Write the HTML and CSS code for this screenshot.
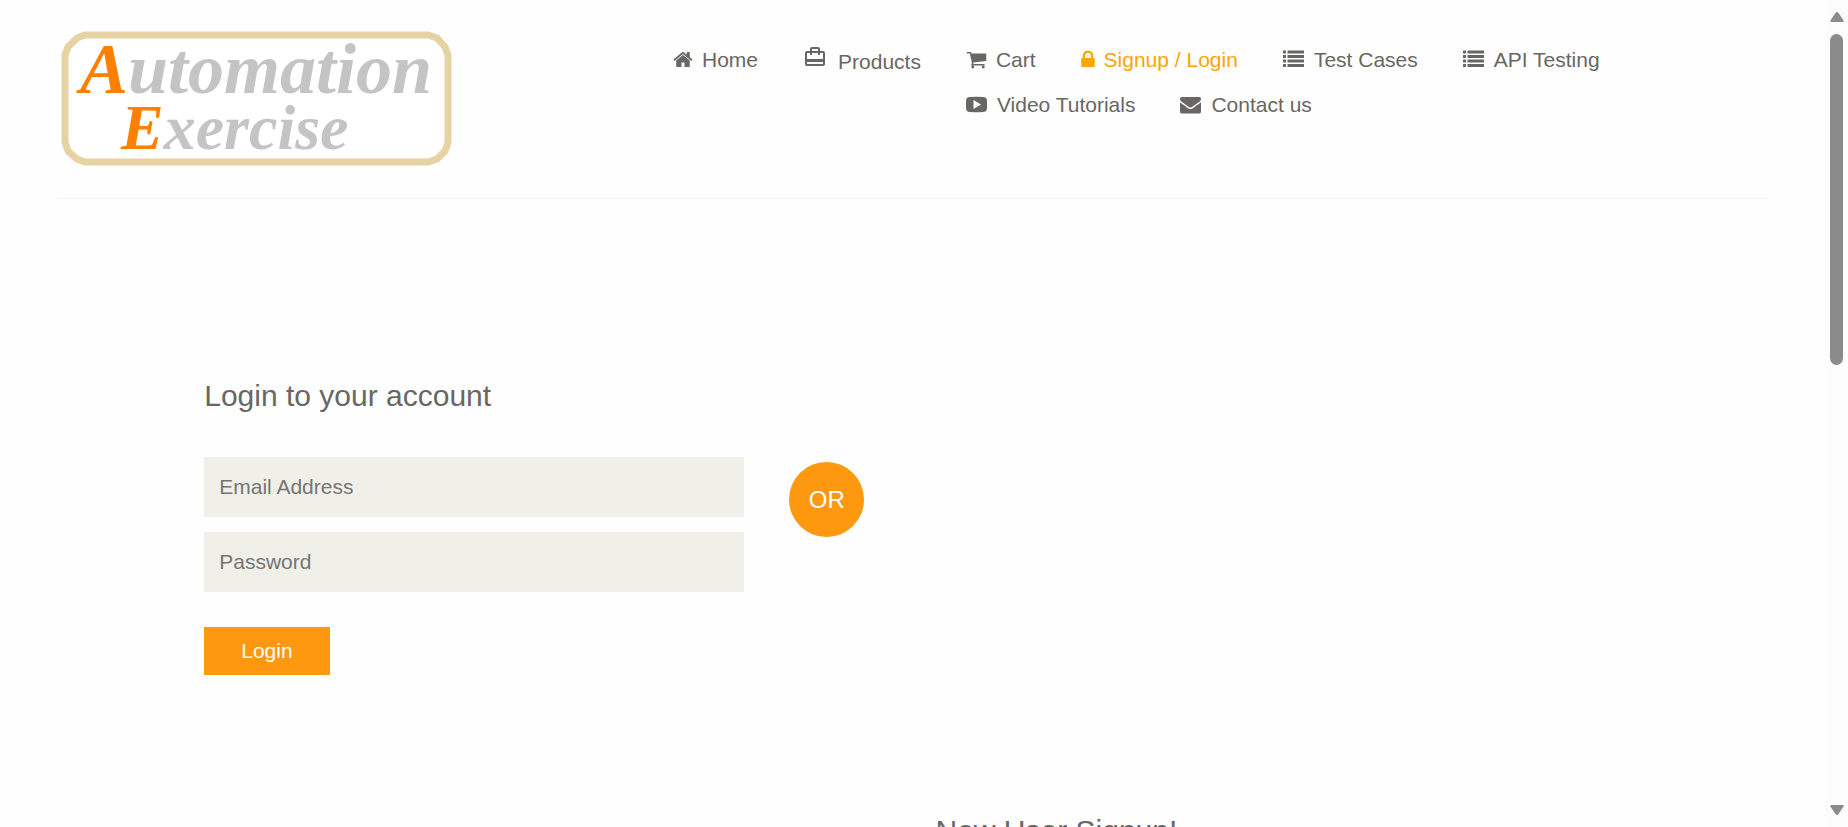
FILE: index.html
```html
<!DOCTYPE html>
<html lang="en">
<head>
<meta charset="utf-8">
<title>Automation Exercise - Signup / Login</title>
<link rel="stylesheet" href="styles.css">
</head>
<body>
<header class="header">
  <a class="logo" href="#" aria-label="Automation Exercise">
    <svg width="392" height="138" viewBox="0 0 392 138">
      <path class="logo-frame" d="M24 5H367L376 8L384 17L387 25V112L384 121L376 129L367 132H24L16 129L7 121L4 112V25L7 17L16 8Z"/>
      <text class="logo-top" x="19" y="63"><tspan class="logo-accent">A</tspan>utomation</text>
      <text class="logo-bottom" x="60" y="119"><tspan class="logo-accent">E</tspan>xercise</text>
    </svg>
  </a>
  <nav class="nav">
    <ul class="menu">
      <li><a href="#"><svg width="20" height="21" viewBox="43 0 1707 1792"><path d="M1472 992v480q0 26-19 45t-45 19h-384v-384h-256v384h-384q-26 0-45-19t-19-45v-480q0-1 .5-3t.5-3l575-474 575 474q1 2 1 6zm223-69l-62 74q-8 9-21 11h-3q-13 0-21-7l-692-577-692 577q-12 8-24 7-13-2-21-11l-62-74q-8-10-7-23.500t11-21.500l719-599q32-26 76-26t76 26l244 204v-195q0-14 9-23t23-9h192q14 0 23 9t9 23v408l219 182q10 8 11 21.500t-7 23.500z"/></svg>Home</a></li>
      <li><a class="tall" href="#"><svg width="24" height="24" viewBox="0 0 24 24"><path d="M20 6h-3V4c0-1.110-.89-2-2-2H9c-1.110 0-2 .89-2 2v2H4c-1.110 0-2 .89-2 2v11c0 1.110.89 2 2 2h16c1.110 0 2-.89 2-2V8c0-1.110-.89-2-2-2zM9 4h6v2H9V4zm11 15H4v-2h16v2zm0-5H4V8h3v2h2V8h6v2h2V8h3v6z"/></svg>Products</a></li>
      <li><a href="#"><svg width="21" height="21" viewBox="0 0 1792 1792"><path d="M704 1536q0 52-38 90t-90 38-90-38-38-90 38-90 90-38 90 38 38 90zm896 0q0 52-38 90t-90 38-90-38-38-90 38-90 90-38 90 38 38 90zm128-1088v512q0 24-16.500 42.500t-40.500 21.500l-1044 122q13 60 13 70 0 16-24 64h920q26 0 45 19t19 45-19 45-45 19h-1024q-26 0-45-19t-19-45q0-11 8-31.500t16-36 21.500-40 15.500-29.500l-177-823h-204q-26 0-45-19t-19-45 19-45 45-19h256q16 0 28.500 6.500t19.500 15.500 13 24.500 8 26 5.500 29.500 4.500 26h1201q26 0 45 19t19 45z"/></svg>Cart</a></li>
      <li><a class="active" href="#"><svg width="14" height="21" viewBox="299 0 1195 1792"><path d="M640 768h512v-192q0-106-75-181t-181-75-181 75-75 181v192zm832 96v576q0 40-28 68t-68 28h-960q-40 0-68-28t-28-68v-576q0-40 28-68t68-28h32v-192q0-184 132-316t316-132 316 132 132 316v192h32q40 0 68 28t28 68z"/></svg>Signup / Login</a></li>
      <li><a href="#"><svg width="22" height="21" viewBox="0 0 1877 1792"><path d="M20 128H236Q256 128 256 148V364Q256 384 236 384H20Q0 384 0 364V148Q0 128 20 128ZM20 512H236Q256 512 256 532V748Q256 768 236 768H20Q0 768 0 748V532Q0 512 20 512ZM20 896H236Q256 896 256 916V1132Q256 1152 236 1152H20Q0 1152 0 1132V916Q0 896 20 896ZM20 1280H236Q256 1280 256 1300V1516Q256 1536 236 1536H20Q0 1536 0 1516V1300Q0 1280 20 1280ZM384 128H1792V384H384ZM384 512H1792V768H384ZM384 896H1792V1152H384ZM384 1280H1792V1536H384Z"/></svg>Test Cases</a></li>
      <li><a href="#"><svg width="22" height="21" viewBox="0 0 1877 1792"><path d="M20 128H236Q256 128 256 148V364Q256 384 236 384H20Q0 384 0 364V148Q0 128 20 128ZM20 512H236Q256 512 256 532V748Q256 768 236 768H20Q0 768 0 748V532Q0 512 20 512ZM20 896H236Q256 896 256 916V1132Q256 1152 236 1152H20Q0 1152 0 1132V916Q0 896 20 896ZM20 1280H236Q256 1280 256 1300V1516Q256 1536 236 1536H20Q0 1536 0 1516V1300Q0 1280 20 1280ZM384 128H1792V384H384ZM384 512H1792V768H384ZM384 896H1792V1152H384ZM384 1280H1792V1536H384Z"/></svg>API Testing</a></li>
      <li><a href="#"><svg width="22" height="21" viewBox="0 0 22 21"><path fill-rule="evenodd" d="M4 3Q10.500 2.600 17 3Q21 3 21 7V14Q21 18 17 18Q10.500 18.400 4 18Q0 18 0 14V7Q0 3 4 3ZM7.500 6V15L15 10.500Z"/></svg>Video Tutorials</a></li>
      <li><a href="#"><svg width="22" height="21" viewBox="0 0 1877 1792"><path d="M1792 710v794q0 66-47 113t-113 47h-1472q-66 0-113-47t-47-113v-794q44 49 101 87 362 246 497 345 57 42 92.500 65.500t94.500 48 110 24.500h2q51 0 110-24.500t94.500-48 92.500-65.500q170-123 498-345 57-39 100-87zm0-294q0 79-49 151t-122 123q-376 261-468 325-10 7-42.500 31t-54 38.500-52 32.500-57.500 27-50 9h-2q-23 0-50-9t-57.500-27-52-32.500-54-38.500-42.500-31q-91-64-262-182.500t-205-142.500q-62-42-117-115.500t-55-136.500q0-78 41.500-130t118.500-52h1472q65 0 112.500 47t47.500 113z"/></svg>Contact us</a></li>
    </ul>
  </nav>
</header>
<main class="account">
  <section class="login">
    <h2>Login to your account</h2>
    <form class="login-form">
      <input type="email" placeholder="Email Address" aria-label="Email Address">
      <input type="password" placeholder="Password" aria-label="Password">
      <button type="submit">Login</button>
    </form>
  </section>
  <div class="or">OR</div>
  <section class="signup">
    <h2>New User Signup!</h2>
  </section>
</main>
<div class="scrollbar" aria-hidden="true">
  <svg width="14" height="10" viewBox="0 0 14 10"><path d="M5.500 1Q7-.8 8.500 1L13.600 8.500Q14 10 13 10H1Q0 10 .4 8.500Z"/></svg>
  <div class="track"><div class="thumb"></div></div>
  <svg width="14" height="10" viewBox="0 0 14 10"><path d="M5.500 9Q7 10.800 8.500 9L13.600 1.500Q14 0 13 0H1Q0 0 .4 1.500Z"/></svg>
</div>
</body>
</html>
```
FILE: styles.css
```css
* {
  box-sizing: border-box;
}

html {
  height: 100%;
  overflow: hidden;
}

body {
  margin: 0;
  padding: 0 80px 0 58px;
  background: #fefefe;
  color: #696763;
  font: 21px/30px "Liberation Sans", Arial, sans-serif;
}

h2 {
  margin: 0;
  font-size: 30px;
  font-weight: 400;
  line-height: 33px;
}

.header,
.account {
  display: grid;
  grid-template-columns: repeat(12, minmax(0, 1fr));
  column-gap: 45px;
}

.header {
  padding: 30px 0;
  border-bottom: 1px solid #f3f3f3;
}

.logo {
  grid-column: span 4;
  margin-left: 3px;
}

.logo svg {
  display: block;
}

.logo-frame {
  fill: #fff;
  stroke: #e6d2a2;
  stroke-width: 7px;
}

.logo text {
  fill: #c4c4c4;
  font-family: "Liberation Serif", "Times New Roman", serif;
  font-style: italic;
  font-weight: 700;
}

.logo .logo-accent {
  fill: #ff8000;
}

.logo-top {
  font-size: 72px;
}

.logo-bottom {
  font-size: 64px;
}

.nav {
  grid-column: span 8;
  padding: 15px 0 0 30px;
}

.menu {
  margin: 0;
  padding: 0;
  list-style: none;
}

/* Floated so the second row tucks in beside the taller Products item. */
.menu li {
  float: left;
  margin: 0 45px 15px 0;
}

.menu a {
  display: flex;
  align-items: flex-start;
  gap: 9px;
  color: #696763;
  text-decoration: none;
}

.menu svg {
  margin-top: 4px;
  fill: currentColor;
}

.menu .tall {
  gap: 11px;
  line-height: 34px;
}

.menu .tall svg {
  margin-top: 0;
}

.menu .active {
  color: orange;
}

.account {
  padding-top: 180px;
}

.login {
  grid-column: 2 / span 4;
}

.login-form {
  display: flex;
  flex-direction: column;
  align-items: flex-start;
  gap: 15px;
  margin-top: 45px;
}

.login-form input {
  width: 100%;
  height: 60px;
  padding: 0 15px;
  border: 0;
  background: #f0f0e9;
  color: #696763;
  font: inherit;
}

.login-form input::placeholder {
  color: #757575;
}

.login-form button {
  height: 48px;
  margin-top: 20px;
  padding: 0 37px;
  border: 0;
  background: #fe980f;
  color: #fff;
  font: inherit;
}

.or {
  grid-column: 6;
  width: 75px;
  height: 75px;
  margin-top: 83px;
  border-radius: 50%;
  background: #fe980f;
  color: #fff;
  font-size: 24px;
  line-height: 75px;
  text-align: center;
}

.signup {
  grid-row: 2;
  grid-column: 7 / span 4;
  padding-top: 139px;
}

.scrollbar {
  position: fixed;
  top: 0;
  right: 0;
  bottom: 0;
  display: flex;
  flex-direction: column;
  align-items: center;
  gap: 12px;
  width: 23px;
  padding: 12px 0;
  background: #fcfcfc;
}

.scrollbar svg {
  flex: none;
  fill: #8b8b8b;
}

.track {
  flex: 1;
}

.thumb {
  width: 13px;
  height: 43.6%;
  border-radius: 7px;
  background: #8b8b8b;
}
```
